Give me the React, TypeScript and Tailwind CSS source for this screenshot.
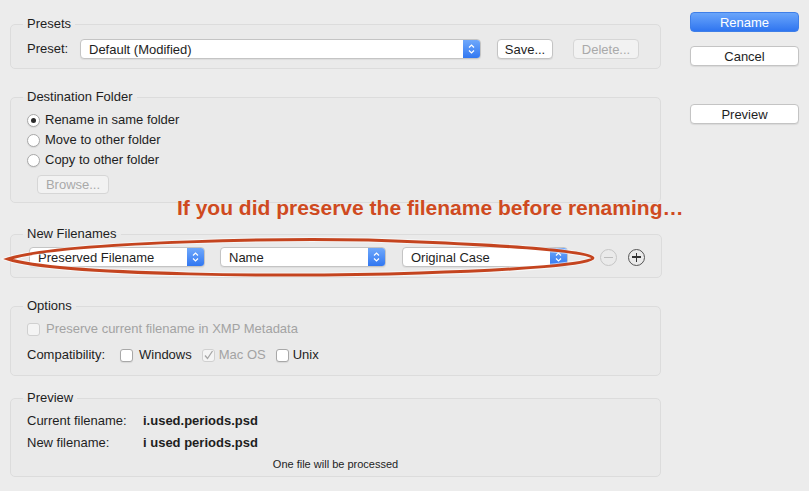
import type { ReactNode } from 'react'

const Stepper = () => (
  <span className="flex h-full w-[17px] shrink-0 items-center justify-center bg-gradient-to-b from-[#6fa8fb] to-[#3177f1]">
    <svg width="7" height="12" viewBox="0 0 7 12">
      <path d="M1 4.5 L3.5 2 L6 4.5 M1 7.5 L3.5 10 L6 7.5" stroke="white" strokeWidth="1.2" fill="none" />
    </svg>
  </span>
)

const Select = ({ value, className = '' }: { value: string; className?: string }) => (
  <div className={`flex h-5 shrink-0 items-center overflow-hidden rounded-[4px] border border-[#c4c4c4] bg-white shadow-[0_1px_1px_rgba(0,0,0,0.06)] ${className}`}>
    <span className="flex-1 pl-2 text-[13px] leading-none text-[#1e1e1e]">{value}</span>
    <Stepper />
  </div>
)

const Button = ({
  children,
  disabled,
  primary,
  className = '',
}: {
  children: ReactNode
  disabled?: boolean
  primary?: boolean
  className?: string
}) => {
  const look = primary
    ? 'bg-gradient-to-b from-[#6aa5fa] to-[#2f75f0] text-white border-[#3f7fe8]'
    : disabled
      ? 'bg-[#f2f2f2] text-[#a9a9a9] border-[#d6d6d6]'
      : 'bg-white text-[#1e1e1e] border-[#c4c4c4] shadow-[0_1px_1px_rgba(0,0,0,0.08)]'
  return (
    <div className={`flex h-5 shrink-0 items-center justify-center rounded-[4px] border text-[13px] leading-none ${look} ${className}`}>
      {children}
    </div>
  )
}

const Radio = ({ checked, label }: { checked?: boolean; label: string }) => (
  <div className="flex h-5 items-center">
    <span className="flex h-[13px] w-[13px] items-center justify-center rounded-full border border-[#a8a8a8] bg-white shadow-[0_1px_1px_rgba(0,0,0,0.08)]">
      {checked && <span className="h-[5px] w-[5px] rounded-full bg-[#2b2b2b]" />}
    </span>
    <span className="ml-[5px] text-[13px] text-[#1e1e1e]">{label}</span>
  </div>
)

const Checkbox = ({ checked, disabled }: { checked?: boolean; disabled?: boolean }) => (
  <span
    className={`flex h-[13px] w-[13px] shrink-0 items-center justify-center rounded-[3px] border ${
      disabled ? 'border-[#d0d0d0] bg-[#f4f4f4]' : 'border-[#a8a8a8] bg-white shadow-[0_1px_1px_rgba(0,0,0,0.08)]'
    }`}
  >
    {checked && (
      <svg width="11" height="11" viewBox="0 0 11 11">
        <path d="M2 5.5 L4.5 8.5 L9.5 1" stroke="#a6a6a6" strokeWidth="1.3" fill="none" />
      </svg>
    )}
  </span>
)

const Group = ({ title, children, className = '' }: { title: string; children: ReactNode; className?: string }) => (
  <fieldset className={`rounded-[5px] border border-[#dcdcdc] bg-[#eaeaea] px-4 ${className}`}>
    <legend className="-ml-1 px-1 text-[13px] leading-4 text-[#1e1e1e]">{title}</legend>
    {children}
  </fieldset>
)

export default function App() {
  return (
    <div className="relative flex h-[491px] w-[809px] bg-[#ececec] pl-[10px] pr-[10px] pt-[12px] font-['Liberation_Sans',Arial,sans-serif] text-[#1e1e1e]">
      <div className="flex w-[651px] flex-col pt-[4px]">
        <Group title="Presets" className="pb-[9px]">
          <div className="mt-[7px] flex items-center">
            <span className="w-[53px] text-[13px]">Preset:</span>
            <Select value="Default (Modified)" className="w-[401px]" />
            <Button className="ml-4 w-[56px]">Save...</Button>
            <Button disabled className="ml-5 w-[66px]">Delete...</Button>
          </div>
        </Group>

        <Group title="Destination Folder" className="mt-[20px] pb-2">
          <div className="mt-[5px] flex flex-col">
            <Radio checked label="Rename in same folder" />
            <Radio label="Move to other folder" />
            <Radio label="Copy to other folder" />
          </div>
          <Button disabled className="ml-[10px] mt-[5px] h-[19px] w-[72px]">Browse...</Button>
        </Group>

        <Group title="New Filenames" className="mt-[23px] pb-[10px]">
          <div className="mt-[5px] flex items-center">
            <Select value="Preserved Filename" className="ml-[2px] w-[176px]" />
            <Select value="Name" className="ml-[15px] w-[166px]" />
            <Select value="Original Case" className="ml-4 w-[166px]" />
            <span className="ml-8 flex h-[17px] w-[17px] items-center justify-center rounded-full border border-[#c6c6c6]">
              <span className="h-px w-[9px] bg-[#bdbdbd]" />
            </span>
            <span className="relative ml-[11px] flex h-[17px] w-[17px] items-center justify-center rounded-full border border-[#555]">
              <span className="h-[1.5px] w-[9px] bg-[#333]" />
              <span className="absolute h-[9px] w-[1.5px] bg-[#333]" />
            </span>
          </div>
        </Group>

        <Group title="Options" className="mt-[20px] pb-[10px]">
          <div className="mt-[5px] flex h-5 items-center">
            <Checkbox disabled />
            <span className="ml-[6px] text-[13px] text-[#a3a3a3]">Preserve current filename in XMP Metadata</span>
          </div>
          <div className="mt-[6px] flex h-5 items-center text-[13px]">
            <span className="w-[93px]">Compatibility:</span>
            <Checkbox />
            <span className="ml-[6px]">Windows</span>
            <span className="ml-[10px]" />
            <Checkbox checked disabled />
            <span className="ml-[4px] text-[#a3a3a3]">Mac OS</span>
            <span className="ml-[10px]" />
            <Checkbox />
            <span className="ml-[4px]">Unix</span>
          </div>
        </Group>

        <Group title="Preview" className="mt-[14px] pb-[2px]">
          <div className="mt-[5px] flex h-5 items-center text-[13px]">
            <span className="w-[116px]">Current filename:</span>
            <span className="font-bold">i.used.periods.psd</span>
          </div>
          <div className="mt-[2px] flex h-5 items-center text-[13px]">
            <span className="w-[116px]">New filename:</span>
            <span className="font-bold">i used periods.psd</span>
          </div>
          <div className="mt-[1px] text-center text-[11px] leading-5">One file will be processed</div>
        </Group>
      </div>

      <div className="ml-[29px] flex w-[109px] flex-col">
        <Button primary>Rename</Button>
        <Button className="mt-[14px]">Cancel</Button>
        <Button className="mt-[38px]">Preview</Button>
      </div>

      <div className="absolute left-[177px] top-[196px] text-[21px] font-bold leading-6 text-[#cf4a20]">
        If you did preserve the filename before renaming…
      </div>

      <svg className="pointer-events-none absolute left-0 top-0" width="809" height="491" viewBox="0 0 809 491">
        <path
          d="M8 259 C 60 242 300 236 420 242 C 520 246 593 252 593 258 C 593 264 520 270 420 273 C 300 277 60 276 8 259 Z"
          fill="none"
          stroke="rgba(255,255,255,0.6)"
          strokeWidth="5"
        />
        <path
          d="M8 259 C 60 242 300 236 420 242 C 520 246 593 252 593 258 C 593 264 520 270 420 273 C 300 277 60 276 8 259 Z"
          fill="none"
          stroke="#c4441f"
          strokeWidth="3"
        />
      </svg>
    </div>
  )
}
